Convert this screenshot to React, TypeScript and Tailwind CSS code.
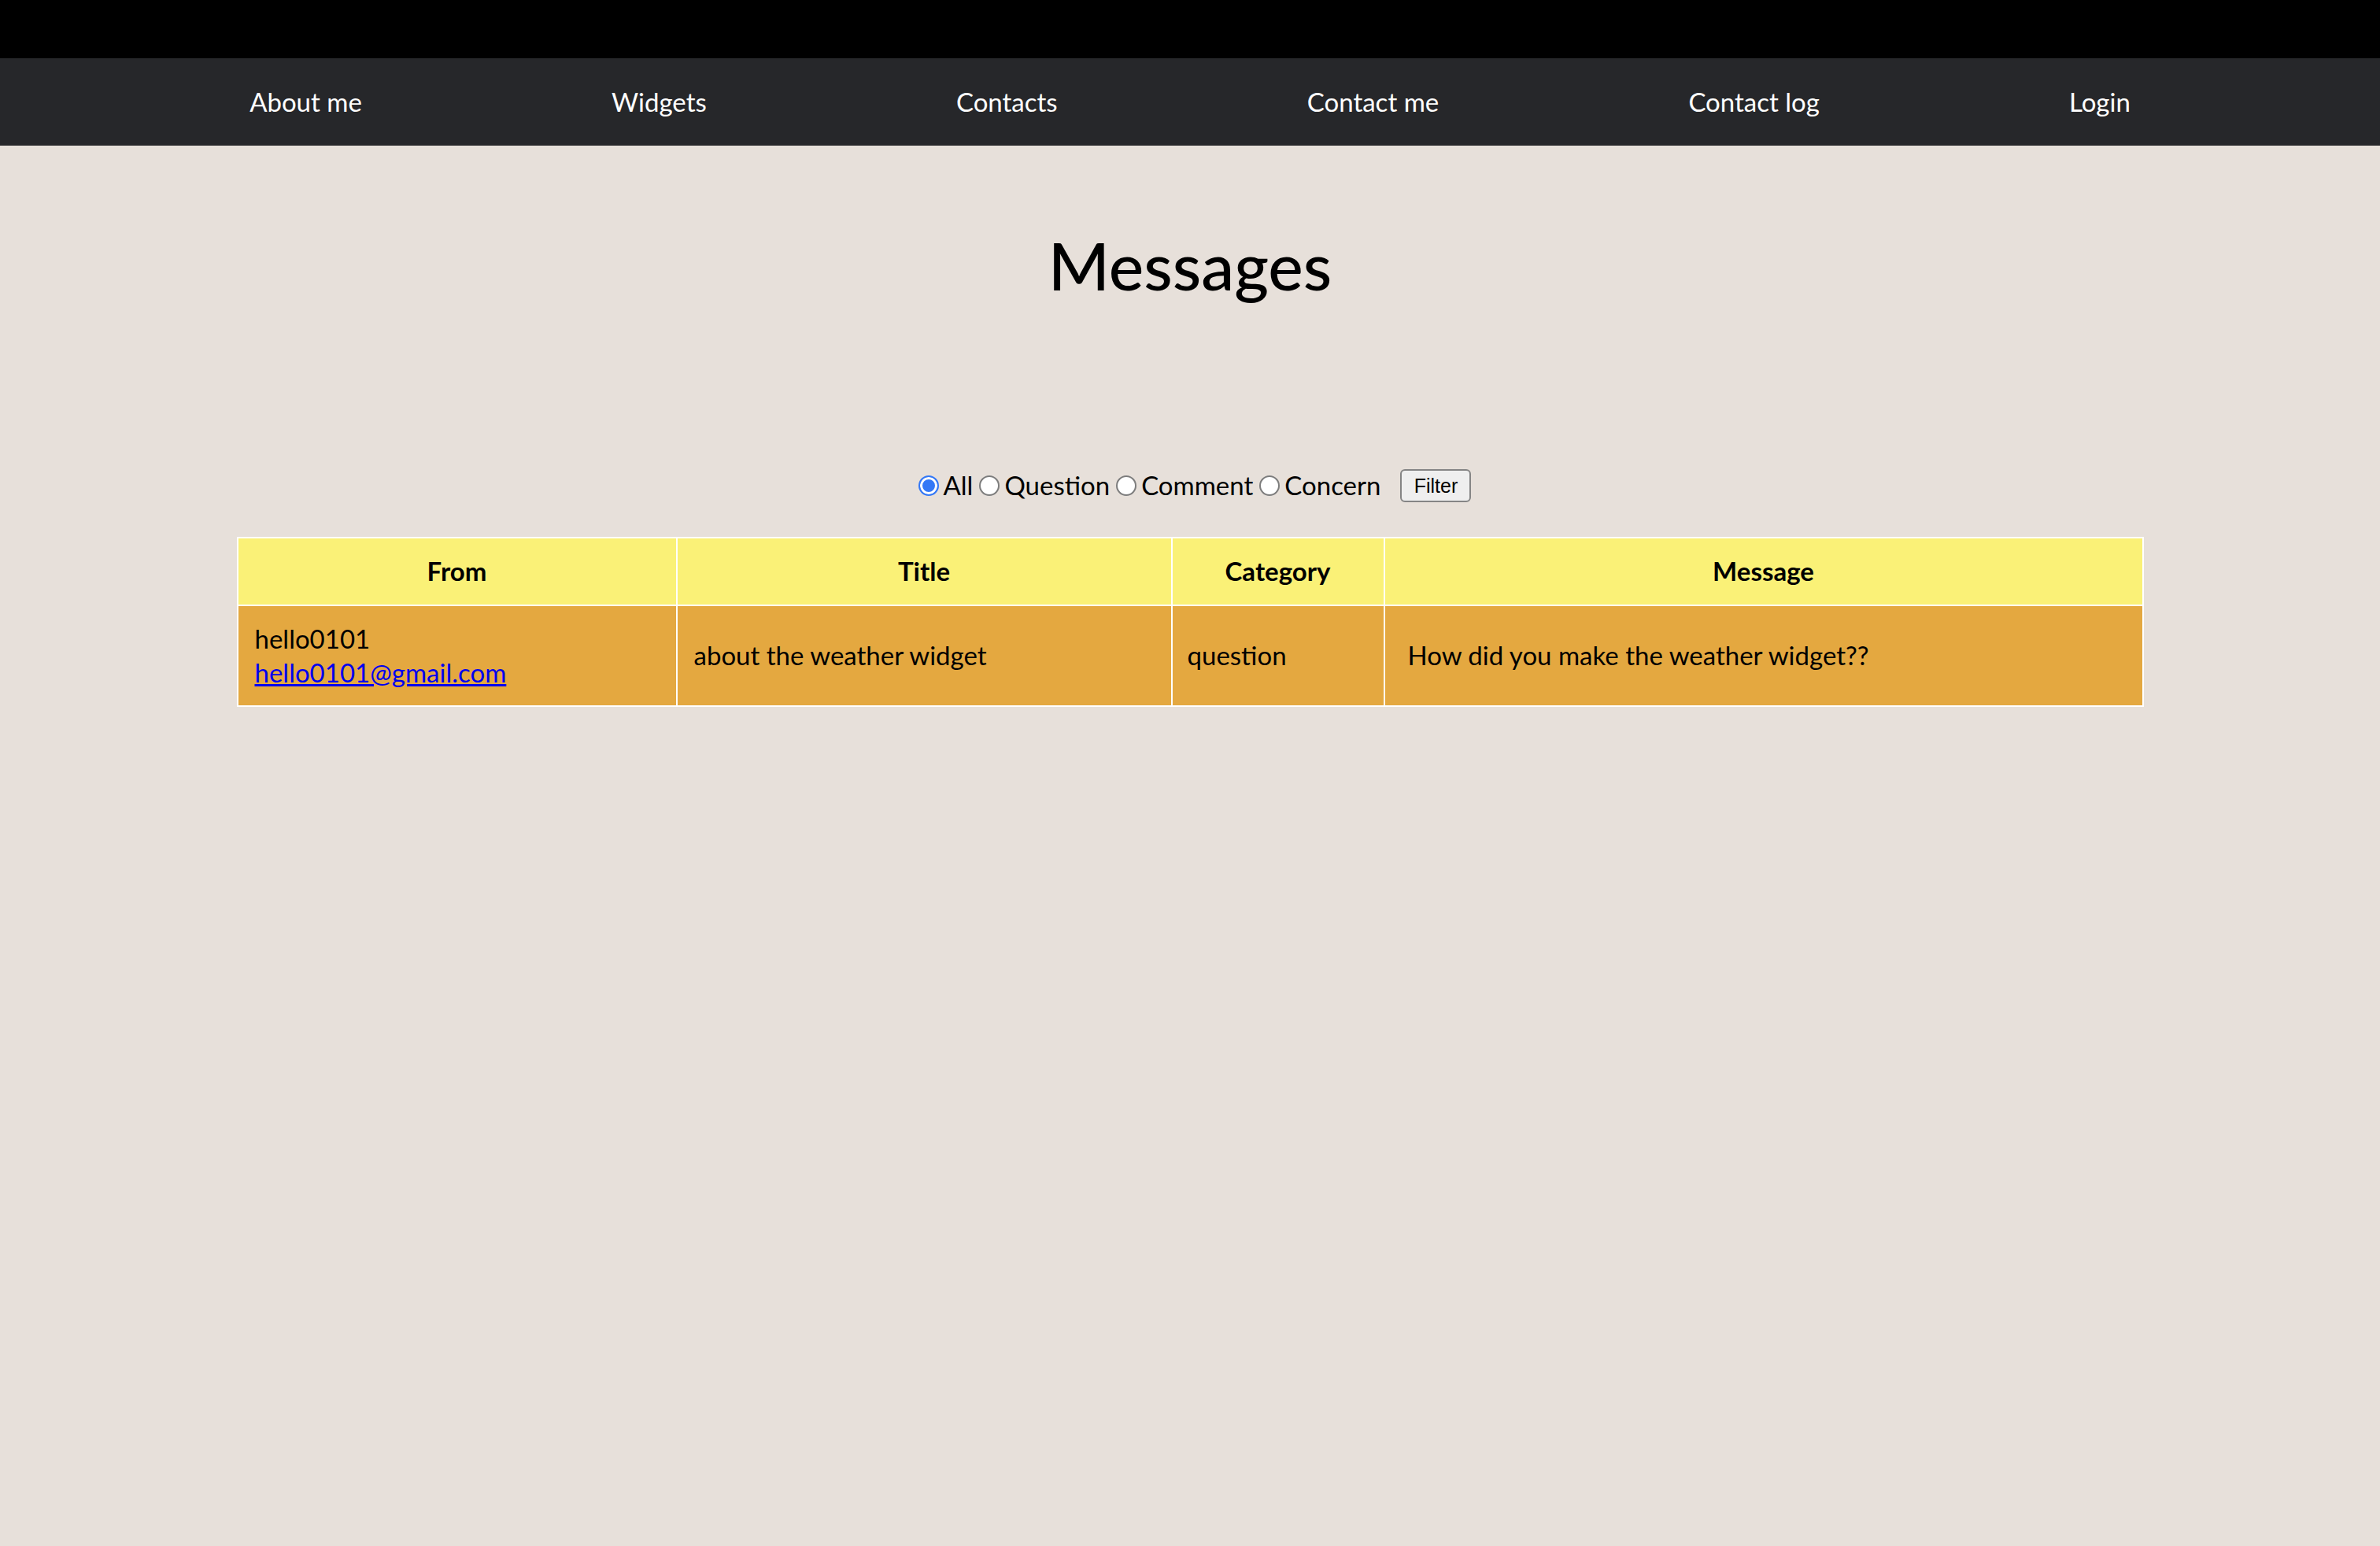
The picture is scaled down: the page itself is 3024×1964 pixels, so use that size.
import React, { useState } from 'react';

const navItems = ['About me', 'Widgets', 'Contacts', 'Contact me', 'Contact log', 'Login'];
const categories = ['All', 'Question', 'Comment', 'Concern'];

export default function App() {
  const [filter, setFilter] = useState('All');

  return (
    <div className="min-h-screen w-full bg-[#e7e0da] font-['Lato','Noto_Sans',sans-serif] text-black">
      <div className="h-[74px] bg-black" />
      <nav className="flex h-[111px] items-center justify-evenly bg-[#26272a] text-[33px] text-white">
        {navItems.map((item) => (
          <a key={item} className="cursor-pointer">
            {item}
          </a>
        ))}
      </nav>

      <h1 className="mt-[104px] text-center text-[84px] font-medium leading-[96px]">Messages</h1>

      <div className="mt-[211px] flex h-[42px] items-center justify-center pl-[12px] text-[33px]">
        {categories.map((c, i) => (
          <label key={c} className={`flex cursor-pointer items-center ${i > 0 ? 'ml-[8px]' : ''}`}>
            <input
              type="radio"
              name="category"
              checked={filter === c}
              onChange={() => setFilter(c)}
              className="m-0 mr-[6px] h-[26px] w-[26px] appearance-none rounded-full border-2 border-[#7d7d7d] bg-white checked:border-[#3478f6] checked:bg-[#3478f6] checked:shadow-[inset_0_0_0_3px_white]"
            />
            <span>{c}</span>
          </label>
        ))}
        <button className="ml-[25px] h-[42px] w-[90px] rounded-[6px] border-2 border-[#858585] bg-[#efefef] font-['Liberation_Sans',Arial,sans-serif] text-[25px] leading-none">
          Filter
        </button>
      </div>

      <table className="mx-auto mt-[44px] w-[2421px] table-fixed border-collapse border-2 border-white text-[33px]">
        <colgroup>
          <col className="w-[558px]" />
          <col className="w-[629px]" />
          <col className="w-[270px]" />
          <col className="w-[964px]" />
        </colgroup>
        <thead>
          <tr className="h-[86px] bg-[#faf177]">
            <th className="border-2 border-white font-bold">From</th>
            <th className="border-2 border-white font-bold">Title</th>
            <th className="border-2 border-white font-bold">Category</th>
            <th className="border-2 border-white font-bold">Message</th>
          </tr>
        </thead>
        <tbody>
          <tr className="h-[128px] bg-[#e4a840]">
            <td className="border-2 border-white px-[21px] leading-[43px]">
              <div>hello0101</div>
              <a href="#" className="text-[#0000ee] underline">
                hello0101@gmail.com
              </a>
            </td>
            <td className="border-2 border-white px-[21px]">about the weather widget</td>
            <td className="border-2 border-white px-[19px]">question</td>
            <td className="border-2 border-white px-[29px]">How did you make the weather widget??</td>
          </tr>
        </tbody>
      </table>
    </div>
  );
}
